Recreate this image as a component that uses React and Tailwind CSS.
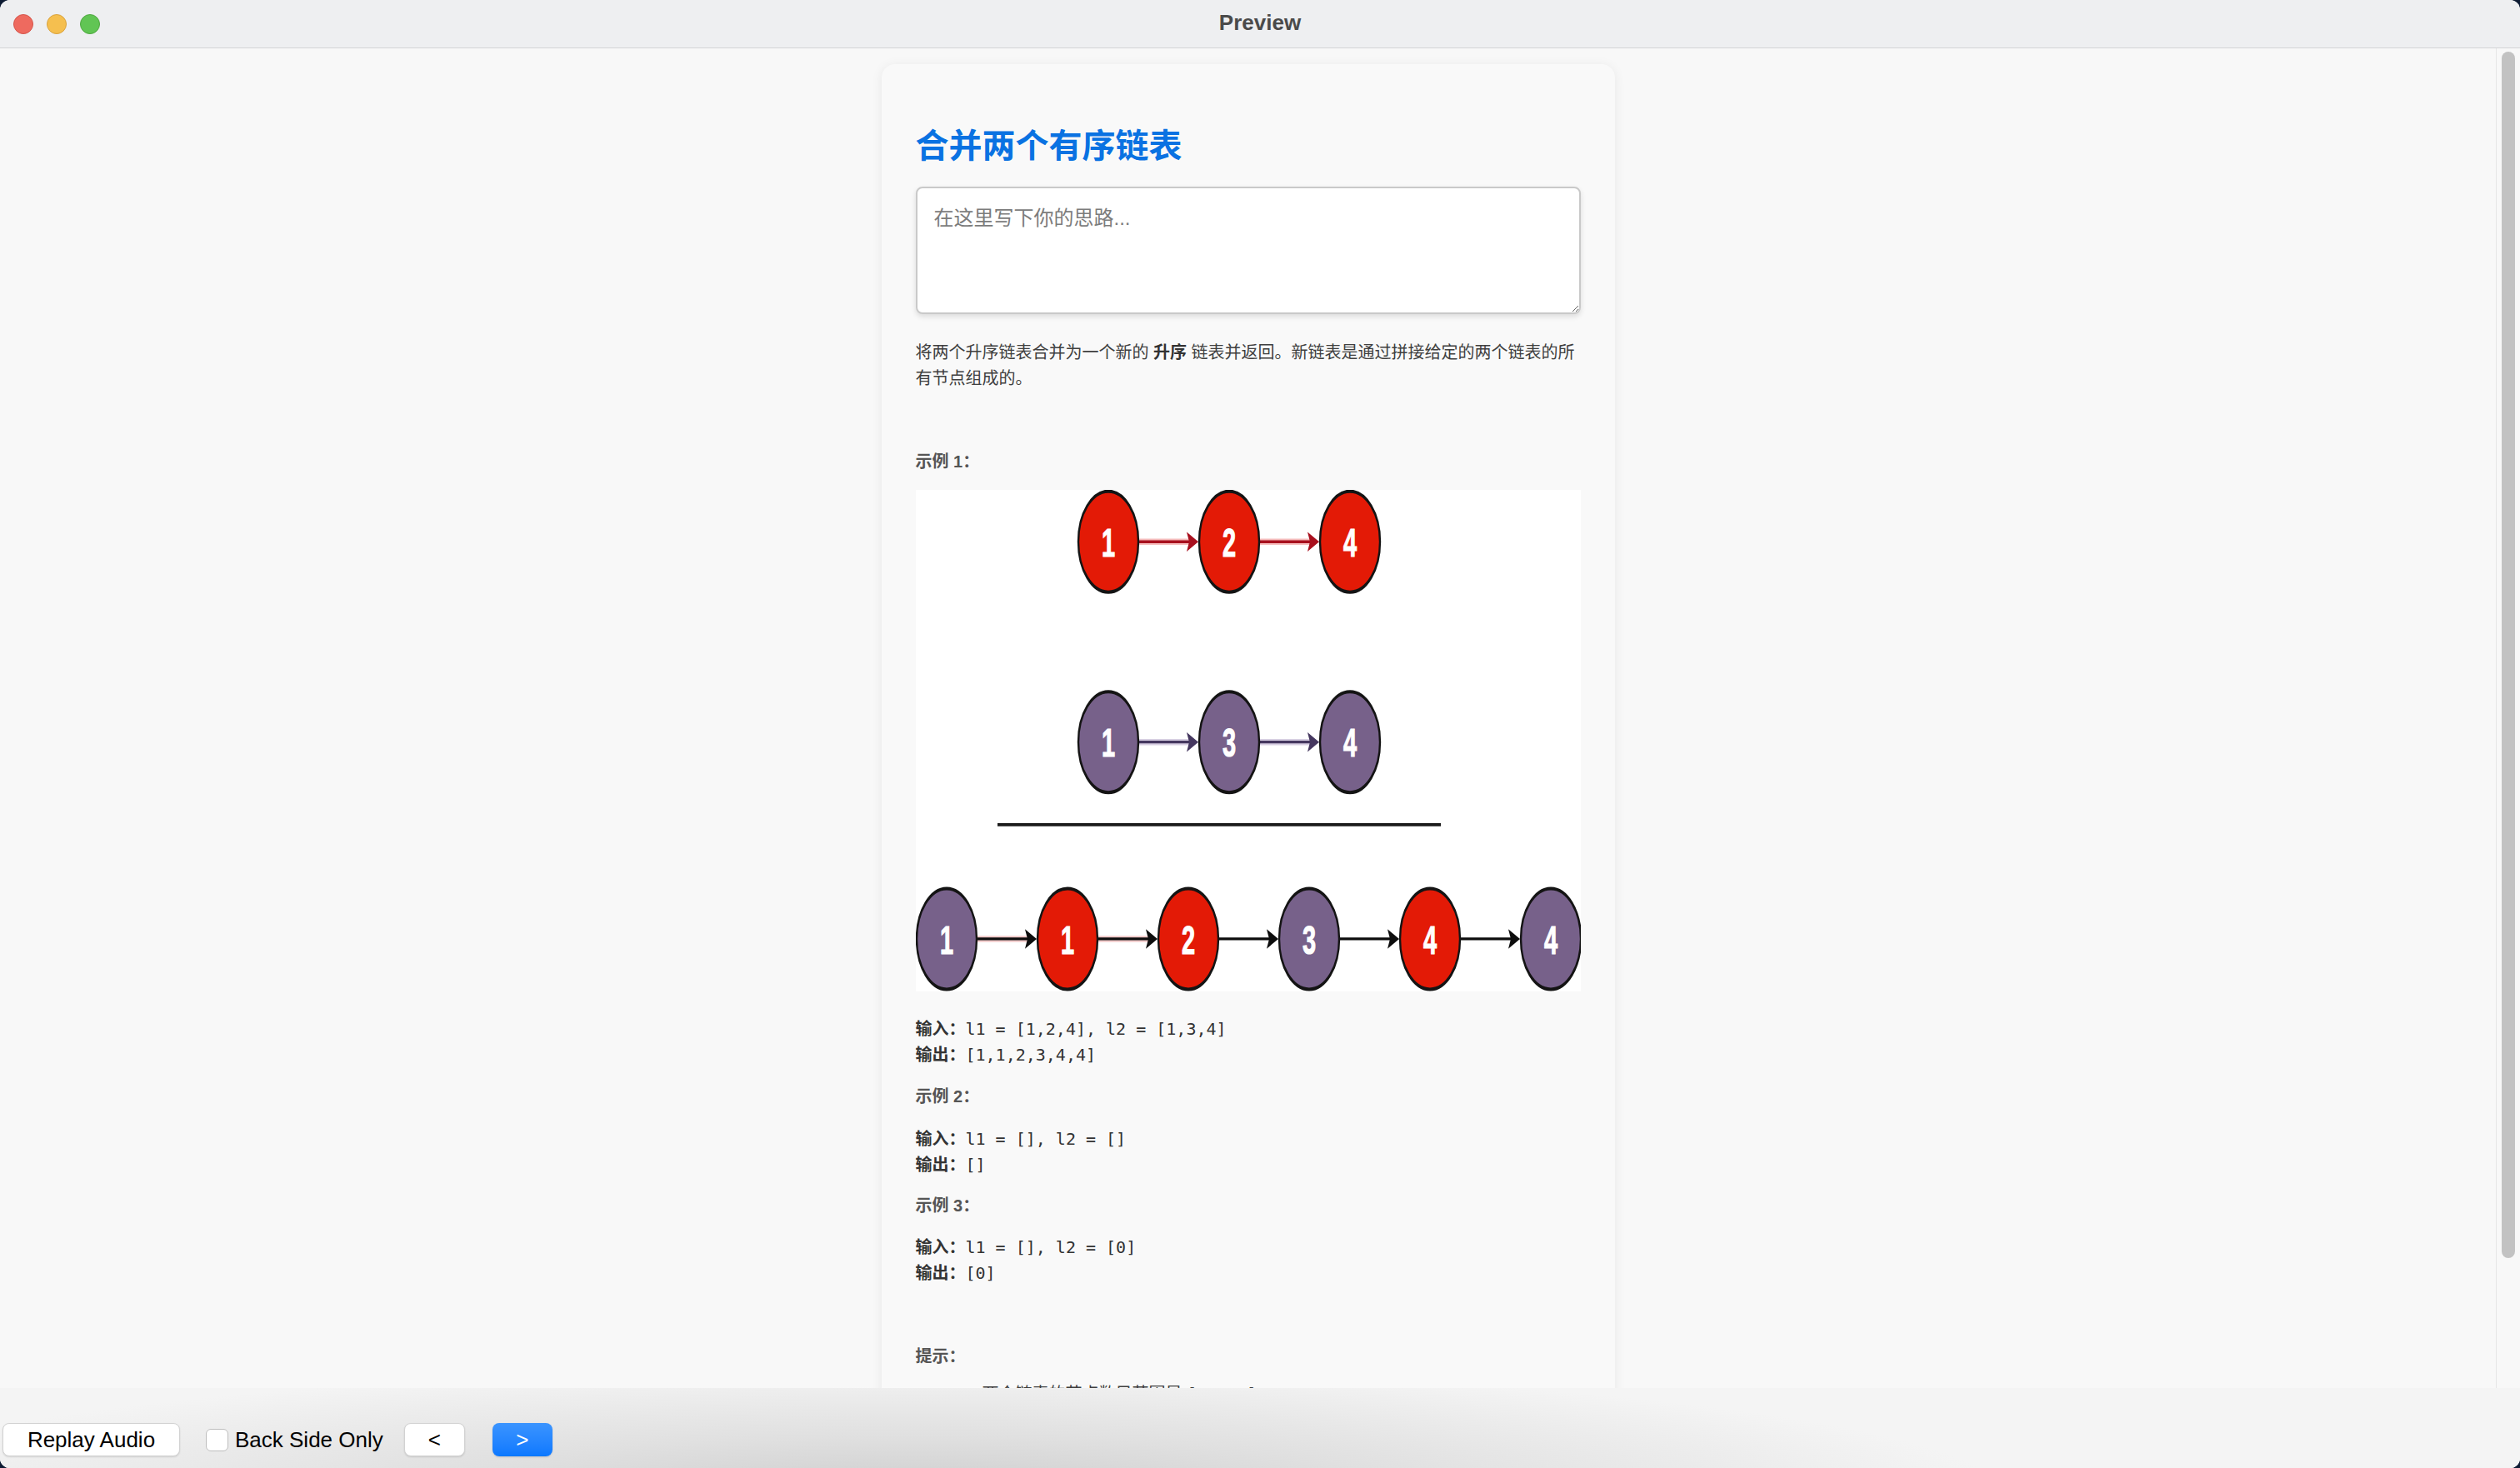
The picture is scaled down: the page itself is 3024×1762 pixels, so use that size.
import React from "react";

const RED = "#e31a06";
const PURPLE = "#77618a";

function Node({ cx, cy, fill, n }) {
  return (
    <g>
      <circle cx={cx} cy={cy} r={36} fill={fill} stroke="#141414" strokeWidth={2.4} />
      <text
        x={cx}
        y={cy + 10.5}
        textAnchor="middle"
        fontFamily="'Liberation Sans', Arial, sans-serif"
        fontWeight="700"
        fontSize="29"
        fill="#ffffff"
        stroke="#ffffff"
        strokeWidth={0.7}
      >
        {n}
      </text>
    </g>
  );
}

function Arrow({ x1, x2, y, color, glow }) {
  return (
    <g>
      {glow && <line x1={x1} y1={y} x2={x2 - 10} y2={y} stroke={glow} strokeWidth={4.5} opacity={0.55} />}
      <line x1={x1} y1={y} x2={x2 - 10} y2={y} stroke={color} strokeWidth={2} />
      <polygon points={`${x2 - 14},${y - 7} ${x2},${y} ${x2 - 14},${y + 7} ${x2 - 11},${y}`} fill={color} />
    </g>
  );
}

function Diagram() {
  const row1 = [231, 376, 521];
  const row3 = [37, 182, 327, 472, 617, 762];
  const row3Fill = [PURPLE, RED, RED, PURPLE, RED, PURPLE];
  const row3Num = ["1", "1", "2", "3", "4", "4"];
  return (
    <svg
      viewBox="0 0 798 358"
      preserveAspectRatio="none"
      className="block w-[798px] h-[602px] bg-white"
    >
      {row1.slice(0, 2).map((cx, i) => (
        <Arrow key={"a1" + i} x1={cx + 37} x2={row1[i + 1] - 37} y={37} color="#a8101e" glow="#f08a8a" />
      ))}
      {row1.map((cx, i) => (
        <Node key={"r1" + i} cx={cx} cy={37} fill={RED} n={["1", "2", "4"][i]} />
      ))}
      {row1.slice(0, 2).map((cx, i) => (
        <Arrow key={"a2" + i} x1={cx + 37} x2={row1[i + 1] - 37} y={180} color="#45375f" glow="#b8a8cc" />
      ))}
      {row1.map((cx, i) => (
        <Node key={"r2" + i} cx={cx} cy={180} fill={PURPLE} n={["1", "3", "4"][i]} />
      ))}
      <line x1={98} y1={239} x2={630} y2={239} stroke="#1a1a1a" strokeWidth={2.3} />
      {row3.slice(0, 5).map((cx, i) => (
        <Arrow key={"a3" + i} x1={cx + 37} x2={row3[i + 1] - 37} y={320.5} color="#0d0d0d" glow={i < 2 ? "#e8a0a0" : null} />
      ))}
      {row3.map((cx, i) => (
        <Node key={"r3" + i} cx={cx} cy={320.5} fill={row3Fill[i]} n={row3Num[i]} />
      ))}
    </svg>
  );
}

const CJK = "font-['Liberation_Sans','Noto_Sans_CJK_SC',sans-serif]";
const MONO = "font-['DejaVu_Sans_Mono','Noto_Sans_CJK_SC',monospace]";

function IO({ input, output, className = "" }) {
  return (
    <div className={`${MONO} text-[20px] leading-[31px] text-[#333333] whitespace-pre ${className}`}>
      <div>
        <span className={`font-bold ${CJK}`}>输入：</span>
        {input}
      </div>
      <div>
        <span className={`font-bold ${CJK}`}>输出：</span>
        {output}
      </div>
    </div>
  );
}

function Label({ children, className = "" }) {
  return (
    <div className={`text-[20px] leading-[31px] font-bold text-[#555555] ${className}`}>{children}</div>
  );
}

export default function App() {
  return (
    <div className={`w-[3024px] h-[1762px] bg-[#0e1c34] overflow-hidden ${CJK}`}>
      <div className="w-full h-full rounded-[12px] overflow-hidden flex flex-col bg-[#f8f8f8]">
        {/* title bar */}
        <div className="h-[58px] shrink-0 bg-[#eeeff1] border-b border-[#d4d4d6] flex items-center relative">
          <div className="flex items-center gap-[16px] pl-[16px]">
            <div className="w-[24px] h-[24px] rounded-full bg-[#ee6a5f] border border-[#d5544a]" />
            <div className="w-[24px] h-[24px] rounded-full bg-[#f5bf4f] border border-[#d9a23c]" />
            <div className="w-[24px] h-[24px] rounded-full bg-[#61c554] border border-[#4ea83f]" />
          </div>
          <div className="absolute left-0 right-0 top-0 h-[55px] flex items-center justify-center pointer-events-none">
            <span className="text-[26px] font-bold text-[#4a4a4a] font-['Liberation_Sans',sans-serif]">Preview</span>
          </div>
        </div>

        {/* middle area */}
        <div className="flex-1 min-h-0 flex">
          <div className="flex-1 min-w-0 overflow-hidden">
            <div className="w-[880px] mx-auto mt-[19px] rounded-[16px] bg-[#f9f9f9] shadow-[0_2px_14px_rgba(0,0,0,0.07)] px-[41px] pt-[40px] pb-[60px]">
              <h1 className="mt-[34px] text-[40px] leading-[48px] font-bold text-[#0a72e2]">合并两个有序链表</h1>
              <textarea
                className="mt-[25px] block w-full h-[153px] border-2 border-[#c9c9c9] rounded-[8px] bg-white px-[20px] py-[18px] text-[24px] leading-[36px] text-[#333] placeholder:text-[#7c7c7c] shadow-[0_3px_6px_rgba(0,0,0,0.12)] outline-none"
                placeholder="在这里写下你的思路..."
              />
              <p className="mt-[31px] text-[20px] leading-[31px] text-[#3f3f3f]">
                将两个升序链表合并为一个新的 <strong className="font-bold text-[#333]">升序</strong> 链表并返回。新链表是通过拼接给定的两个链表的所有节点组成的。
              </p>
              <Label className="mt-[69px]">示例 1：</Label>
              <div className="mt-[18px]">
                <Diagram />
              </div>
              <IO className="mt-[30px]" input="l1 = [1,2,4], l2 = [1,3,4]" output="[1,1,2,3,4,4]" />
              <Label className="mt-[19px]">示例 2：</Label>
              <IO className="mt-[20px]" input="l1 = [], l2 = []" output="[]" />
              <Label className="mt-[18px]">示例 3：</Label>
              <IO className="mt-[19px]" input="l1 = [], l2 = [0]" output="[0]" />
              <Label className="mt-[69px]">提示：</Label>
              <ul className="mt-[14px] pl-[80px] list-disc text-[20px] leading-[31px] text-[#3f3f3f]">
                <li>两个链表的节点数目范围是 <code className={MONO}>[0, 50]</code></li>
                <li><code className={MONO}>-100 &lt;= Node.val &lt;= 100</code></li>
                <li><code className={MONO}>l1</code> 和 <code className={MONO}>l2</code> 均按 <strong>非递减顺序</strong> 排列</li>
              </ul>
            </div>
          </div>
          {/* scrollbar */}
          <div className="w-[29px] shrink-0 border-l border-[#e6e6e6] bg-[#f8f8f8] pl-[6px] pt-[4px]">
            <div className="w-[16px] h-[1448px] rounded-full bg-[#c2c2c2]" />
          </div>
        </div>

        {/* bottom bar */}
        <div className="h-[96px] shrink-0 bg-[#f4f4f4] bg-[radial-gradient(ellipse_1300px_150px_at_1100px_130%,#cdcdcd_0%,#e0e0e0_45%,#f4f4f4_100%)] pt-[42px] flex items-start font-['Liberation_Sans',sans-serif]">
          <button className="ml-[3px] w-[213px] h-[40px] rounded-[8px] bg-white border border-[#d2d2d2] shadow-[0_1px_2px_rgba(0,0,0,0.12)] text-[26px] text-black flex items-center justify-center">
            Replay Audio
          </button>
          <div className="ml-[31px] h-[40px] flex items-center">
            <div className="w-[27px] h-[27px] rounded-[6px] bg-white border border-[#bdbdbd]" />
            <span className="ml-[8px] text-[26px] text-black">Back Side Only</span>
          </div>
          <button className="ml-[25px] w-[73px] h-[40px] rounded-[8px] bg-white border border-[#d2d2d2] shadow-[0_1px_2px_rgba(0,0,0,0.12)] text-[26px] text-black flex items-center justify-center">
            &lt;
          </button>
          <button className="ml-[33px] w-[72px] h-[40px] rounded-[8px] bg-gradient-to-b from-[#3a94ff] to-[#0a78ff] shadow-[0_1px_2px_rgba(0,0,0,0.15)] text-[26px] text-white flex items-center justify-center">
            &gt;
          </button>
        </div>
      </div>
    </div>
  );
}
